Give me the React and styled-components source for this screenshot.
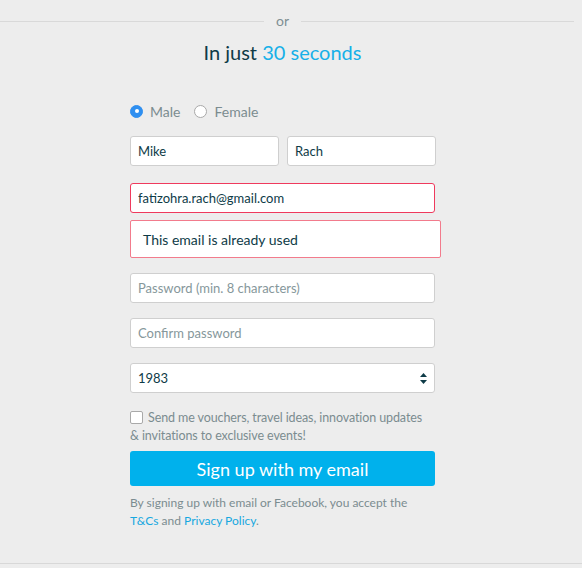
import React from 'react'
import styled, { createGlobalStyle } from 'styled-components'

const GlobalStyle = createGlobalStyle`
	html, body {
		margin: 0;
		padding: 0;
		background: #ededed;
	}
	body {
		font-family: Lato, "Open Sans", sans-serif;
		color: #0e3b47;
	}
`

const Page = styled.div`
	height: 564px;
	border-bottom: 1px solid #d8d8d8;
	box-sizing: border-box;
	width: 582px;
	padding-top: 12px;
`

const Divider = styled.div`
	display: flex;
	align-items: center;
	width: 574px;
	height: 18px;
`

const Line = styled.div`
	height: 1px;
	background: #d9d9d9;
	flex: ${(p) => (p.left ? '0 0 264px' : '1')};
`

const Or = styled.span`
	width: 37px;
	text-align: center;
	font-size: 14px;
	color: #7f8f93;
	line-height: 18px;
`

const Title = styled.h2`
	margin: 8px 0 0;
	width: 565px;
	text-align: center;
	font-size: 20px;
	font-weight: 400;
	line-height: 28px;
	color: #0e3b47;
`

const Blue = styled.span`
	color: #17b0e8;
`

const Form = styled.form`
	width: 305px;
	margin: 35px 0 0 130px;
	display: flex;
	flex-direction: column;
`

const Radios = styled.div`
	display: flex;
	align-items: center;
	gap: 14px;
	height: 20px;
`

const RadioLabel = styled.label`
	display: flex;
	align-items: center;
	gap: 7px;
	font-size: 14px;
	color: #7b8c90;
`

const RadioDot = styled.span`
	width: 13px;
	height: 13px;
	border-radius: 50%;
	box-sizing: border-box;
	background: ${(p) => (p.checked ? '#2f8ff0' : '#fff')};
	border: 1px solid ${(p) => (p.checked ? '#2f8ff0' : '#a9a9a9')};
	display: flex;
	align-items: center;
	justify-content: center;
	&::after {
		content: '';
		width: 4px;
		height: 4px;
		border-radius: 50%;
		background: #fff;
		display: ${(p) => (p.checked ? 'block' : 'none')};
	}
`

const Row = styled.div`
	display: flex;
	gap: 8px;
	margin-top: ${(p) => p.top || 0}px;
`

const Input = styled.input`
	box-sizing: border-box;
	width: ${(p) => p.w || '100%'};
	height: 30px;
	margin-top: ${(p) => p.top || 0}px;
	padding: 0 7px;
	border: 1px solid ${(p) => (p.error ? '#ef3a5d' : '#cfcfcf')};
	border-radius: 3px;
	background: #fff;
	font-family: inherit;
	font-size: 13px;
	color: #0e3b47;
	outline: none;
	&::placeholder {
		color: #86979b;
	}
`

const ErrorBox = styled.div`
	box-sizing: border-box;
	width: 311px;
	height: 38px;
	margin-top: 7px;
	padding: 0 12px;
	display: flex;
	align-items: center;
	background: #fff;
	border: 1px solid #f27b8c;
	border-radius: 2px;
	font-size: 14px;
	color: #0e3b47;
`

const SelectBox = styled.div`
	box-sizing: border-box;
	height: 30px;
	margin-top: 15px;
	padding: 0 7px;
	display: flex;
	align-items: center;
	justify-content: space-between;
	border: 1px solid #cfcfcf;
	border-radius: 3px;
	background: #fff;
	font-size: 13px;
	color: #0e3b47;
`

const Arrows = styled.svg`
	width: 7px;
	height: 11px;
`

const Check = styled.label`
	margin-top: 16px;
	font-size: 12.5px;
	letter-spacing: -0.1px;
	line-height: 18px;
	color: #7b8c90;
`

const Box = styled.span`
	display: inline-block;
	vertical-align: -2px;
	width: 13px;
	height: 13px;
	box-sizing: border-box;
	border: 1px solid #a9a9a9;
	border-radius: 2px;
	background: #fff;
	margin-right: 5px;
`

const Button = styled.button`
	margin-top: 6px;
	height: 35px;
	border: 0;
	border-radius: 3px;
	background: #00b1ec;
	color: #fff;
	font-family: inherit;
	font-size: 18px;
	cursor: pointer;
`

const Legal = styled.p`
	margin: 8px 0 0;
	font-size: 12px;
	line-height: 18px;
	color: #7b8c90;
`

const A = styled.a`
	color: #17a8e0;
	text-decoration: none;
`

const App = () => (
	<>
		<GlobalStyle />
		<Page>
			<Divider>
				<Line left />
				<Or>or</Or>
				<Line />
			</Divider>
			<Title>
				In just <Blue>30 seconds</Blue>
			</Title>
			<Form onSubmit={(e) => e.preventDefault()}>
				<Radios>
					<RadioLabel>
						<RadioDot checked />
						Male
					</RadioLabel>
					<RadioLabel>
						<RadioDot />
						Female
					</RadioLabel>
				</Radios>
				<Row top={15}>
					<Input w="149px" defaultValue="Mike" />
					<Input w="149px" defaultValue="Rach" />
				</Row>
				<Input top={17} error defaultValue="fatizohra.rach@gmail.com" />
				<ErrorBox>This email is already used</ErrorBox>
				<Input top={15} placeholder="Password (min. 8 characters)" />
				<Input top={15} placeholder="Confirm password" />
				<SelectBox>
					<span>1983</span>
					<Arrows viewBox="0 0 7 11">
						<path d="M3.5 0 L7 4 H0 Z M0 7 H7 L3.5 11 Z" fill="#0e3b47" />
					</Arrows>
				</SelectBox>
				<Check>
					<Box />
					Send me vouchers, travel ideas, innovation updates &amp;&nbsp;invitations to exclusive events!
				</Check>
				<Button type="submit">Sign up with my email</Button>
				<Legal>
					By signing up with email or Facebook, you accept the <A href="#">T&amp;Cs</A> and{' '}
					<A href="#">Privacy Policy</A>.
				</Legal>
			</Form>
		</Page>
	</>
)

export default App
